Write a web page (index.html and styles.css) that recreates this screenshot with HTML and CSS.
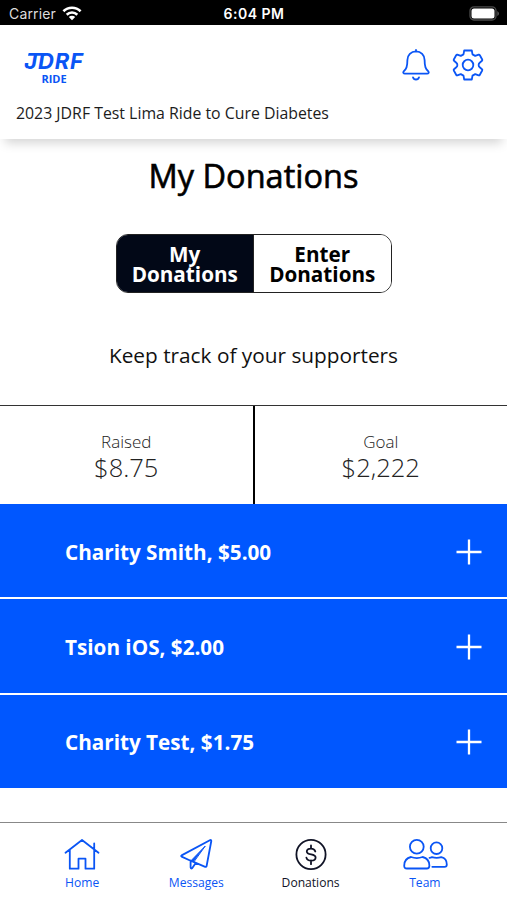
FILE: index.html
```html
<!DOCTYPE html>
<html lang="en">
<head>
<meta charset="utf-8">
<title>My Donations</title>
<link rel="stylesheet" href="styles.css">
</head>
<body>
<div class="status">
  <div class="carrier"><span>Carrier</span>
    <svg width="20" height="15" viewBox="0 0 20 15" fill="none" stroke="#fff" stroke-width="2.6"><path d="M1.4 5.2a12.3 12.3 0 0 1 17.2 0"/><path d="M4.7 8.7a7.6 7.6 0 0 1 10.6 0"/><path d="M10 14.3l-3.2-3.2a4.5 4.5 0 0 1 6.4 0z" fill="#fff" stroke="none"/></svg>
  </div>
  <time>6:04 PM</time>
  <svg class="battery" width="31" height="15" viewBox="0 0 31 15"><rect x="1" y=".8" width="26" height="13.2" rx="4" fill="none" stroke="#4b4b4b" stroke-width="1.3"/><rect x="2.5" y="2.4" width="23" height="10" rx="2.5" fill="#fff"/><path d="M28.3 5v5q1.7-1 1.7-2.5T28.3 5z" fill="#5b5b5b"/></svg>
</div>
<header class="header">
  <div class="top">
    <div class="logo"><svg class="logo-bar" width="18" height="3" viewBox="0 0 18 3"><path d="M.7 0H18l-.6 2.800H0z" fill="#0a55f5"/></svg><b class="jdrf">JDRF</b><b class="ride">RIDE</b></div>
    <div class="actions">
      <svg width="28" height="32" viewBox="0 0 28 32"><path d="M14 1v1.5M14 2.400c-5 0-8.600 3.700-8.600 8.600 0 7-1.200 8.800-3.500 11.200-1.200 1.300-.5 2.500 1 2.500h22.200c1.500 0 2.200-1.200 1-2.500-2.300-2.400-3.500-4.200-3.500-11.200 0-4.900-3.600-8.600-8.600-8.600zM11 28.300c.4 1.500 1.500 2.200 3 2.200s2.600-.7 3-2.200"/></svg>
      <svg width="32" height="32" viewBox="0 0 32 32"><circle cx="16" cy="16" r="5.3"/><path d="M12.200 1.500h7.600l.7 3.900 2.700 1.500 3.500-1.300q.7-.2 1 .4l2.500 4.500q.4.800-.2 1.300l-2.300 1.900a3 3 0 0 0 0 4.600l2.300 1.900q.6.500.2 1.300l-2.500 4.500q-.3.600-1 .4l-3.500-1.300-2.700 1.500-.7 3.900h-7.600l-.7-3.900-2.700-1.500-3.500 1.300q-.7.200-1-.4l-2.500-4.500q-.4-.8.2-1.300l2.300-1.900a3 3 0 0 0 0-4.600L2 11.800q-.6-.5-.2-1.300L4.300 6q.3-.6 1-.4l3.500 1.300 2.700-1.500z"/></svg>
    </div>
  </div>
  <p class="event">2023 JDRF Test Lima Ride to Cure Diabetes</p>
</header>
<main>
  <h1>My Donations</h1>
  <div class="toggle"><button class="active">My<br>Donations</button><button>Enter<br>Donations</button></div>
  <p class="lead">Keep track of your supporters</p>
  <section class="stats">
    <div><span class="label">Raised</span><span class="amount">$8.75</span></div>
    <div><span class="label">Goal</span><span class="amount">$2,222</span></div>
  </section>
  <ul class="list">
    <li><span>Charity Smith, $5.00</span><svg width="26" height="26" viewBox="0 0 26 26"><path d="M13 .5v25M.5 13h25"/></svg></li>
    <li><span>Tsion iOS, $2.00</span><svg width="26" height="26" viewBox="0 0 26 26"><path d="M13 .5v25M.5 13h25"/></svg></li>
    <li><span>Charity Test, $1.75</span><svg width="26" height="26" viewBox="0 0 26 26"><path d="M13 .5v25M.5 13h25"/></svg></li>
  </ul>
</main>
<nav class="tabs">
  <a><svg width="36" height="33" viewBox="0 0 36 33"><path d="M1.500 15.700 18 3l16.500 12.700M5.800 12.500v19.200h8.700v-10h7v10h8.700V12.500M30.200 12.500V6.500"/></svg><span>Home</span></a>
  <a><svg width="36" height="33" viewBox="0 0 36 33"><path d="M32.300 3 3.600 18.400q-.8.600 0 1.200l9 4.100 14.600 6.100q1.200.4 1.400-.8L33.300 4q0-1.300-1-1zM12.600 23.700v6.700q.3 1.900 1.700.6l3.400-5.100"/><path d="M27 9.300 13 23.700l2.500 1.100z" fill="#0a55f5" stroke-width="1"/></svg><span>Messages</span></a>
  <a class="current"><svg width="36" height="33" viewBox="0 0 36 33"><circle cx="18" cy="17.500" r="14.600"/><path d="M18 8.500V11.500M18 23.500v3.700M22.300 14.500c-.5-1.900-2-2.900-4.300-2.900-2.500 0-4.200 1-4.200 2.900 0 4.300 8.800 1.600 8.800 6 0 2-1.800 3.200-4.500 3.200-2.600 0-4.200-1-4.700-3.100"/></svg><span>Donations</span></a>
  <a><svg width="46" height="33" viewBox="0 0 46 33"><circle cx="14.800" cy="9.700" r="6.900"/><circle cx="34.500" cy="11.200" r="5.800"/><path d="M9 20c3.700 1.400 7.900 1.400 11.600 0 4.500 1 6.800 4 6.800 8.700 0 1.900-.9 2.800-2.700 2.800H4.900c-1.800 0-2.700-.9-2.700-2.800 0-4.700 2.300-7.700 6.800-8.700zM27.500 20.800q1.200 0 2.500-.7 4.700 1.500 9.300 0c3.700.8 5.500 3.500 5.500 7.300 0 1.600-.8 2.400-2.300 2.400H30.300"/></svg><span>Team</span></a>
</nav>
</body>
</html>
```
FILE: styles.css
```css
* { box-sizing: border-box; }
body { margin: 0; width: 507px; height: 900px; display: flex; flex-direction: column; background: #fff; color: #000; font-family: "Open Sans", sans-serif; overflow: hidden; }
p, h1, ul { margin: 0; padding: 0; }
span, b, h1, p { white-space: nowrap; }
.status { height: 25px; flex: none; background: #000; color: #fff; display: grid; grid-template-columns: 1fr auto 1fr; align-items: center; padding: 2px 7px 0 9px; font: 14px/20px Inter, sans-serif; }
.carrier { display: flex; align-items: center; gap: 6px; color: #ddd; letter-spacing: .15px; }
.status time { font-weight: 600; letter-spacing: .5px; margin-right: 1px; }
.battery { justify-self: end; }
.header { height: 114px; flex: none; padding: 20px 23px 0 16px; box-shadow: 0 9px 10px -5px #d4d4d4; }
.top { display: flex; justify-content: space-between; height: 48px; }
.logo { position: relative; width: 76px; padding-top: 5px; display: flex; flex-direction: column; align-items: center; color: #0a55f5; }
.logo-bar { position: absolute; left: 12px; top: 8px; }
.jdrf { font: italic 700 22px/23px Inter, sans-serif; letter-spacing: .8px; }
.ride { font: 700 11px/11px "Open Sans", sans-serif; }
.actions { display: flex; gap: 22px; padding-top: 4px; }
.actions svg, .tabs svg { fill: none; stroke: #0a55f5; stroke-width: 1.8; stroke-linejoin: round; stroke-linecap: round; }
.event { font-size: 15.85px; line-height: 22px; margin-top: 8.500px; color: #1c1c1c; }
main { flex: 1; display: flex; flex-direction: column; align-items: center; }
h1 { margin-top: 16px; font-size: 32.5px; line-height: 42px; font-weight: 400; -webkit-text-stroke: .6px #000; }
.toggle { margin-top: 37px; width: 276px; height: 59px; display: flex; border: 1px solid #222; border-radius: 12px; overflow: hidden; }
.toggle button { flex: 1; border: 0; padding: 0; background: #fff; color: #000; font: 700 20.7px/20px "Open Sans", sans-serif; }
.toggle .active { background: #020817; color: #fff; border-right: 1px solid #222; }
.lead { margin-top: 47px; font-size: 20.8px; line-height: 30px; color: #111; }
.stats { margin-top: 35px; width: 100%; height: 99px; display: flex; border-top: 1.5px solid #333; }
.stats div { flex: 1; display: flex; flex-direction: column; align-items: center; padding-top: 25px; font-weight: 300; color: #222; }
.stats div:first-child { border-right: 2px solid #000; }
.label { font-size: 17px; line-height: 22px; }
.amount { font-size: 25.5px; line-height: 28px; }
.list { width: 100%; list-style: none; display: grid; gap: 2px; }
.list li { height: 93.300px; background: #0057ff; color: #fff; display: flex; align-items: center; justify-content: space-between; padding: 2px 25px 0 65px; font-size: 20.7px; font-weight: 700; }
.list svg { stroke: #fff; stroke-width: 2.3; }
.tabs { height: 78px; flex: none; border-top: 1px solid #888; padding: 14px 25px 0; display: grid; grid-template-columns: repeat(4, 1fr); }
.tabs a { display: flex; flex-direction: column; align-items: center; color: #0a55f5; font-size: 12.1px; line-height: 16px; gap: 5px; }
.tabs .current { color: #101326; }
.tabs .current svg { stroke: #101326; }
```
